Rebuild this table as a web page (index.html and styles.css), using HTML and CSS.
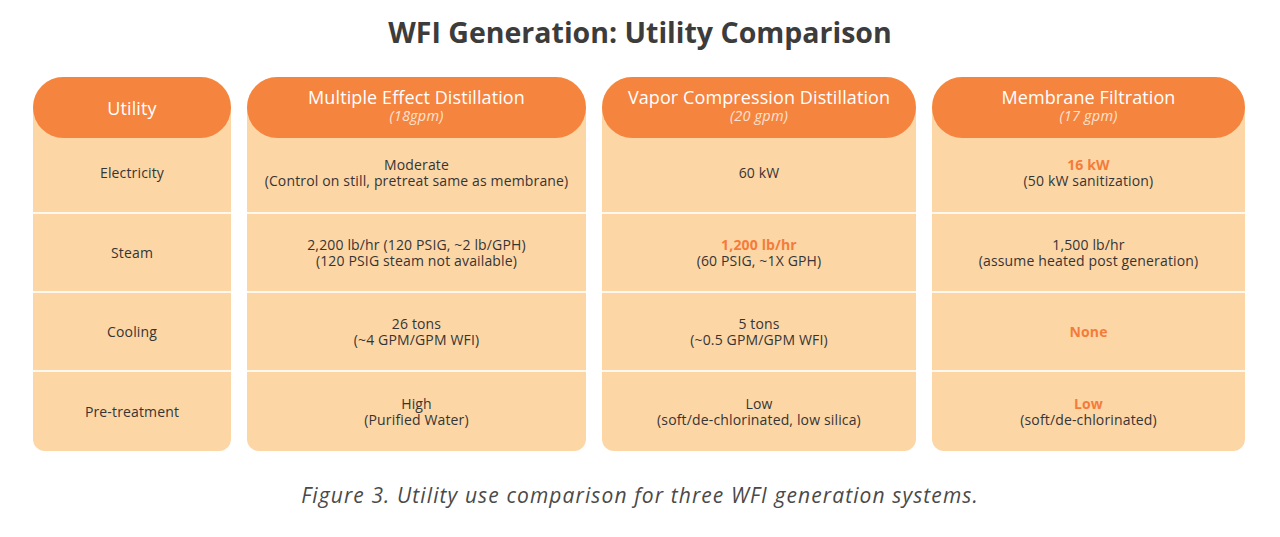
FILE: index.html
```html
<!DOCTYPE html>
<html lang="en">
<head>
<meta charset="utf-8">
<title>WFI Generation: Utility Comparison</title>
<link rel="stylesheet" href="styles.css">
</head>
<body>
<main class="figure">
  <h1 class="title">WFI Generation: Utility Comparison</h1>
  <div class="table">
    <section class="col col-label">
      <header class="head"><span class="head-title">Utility</span></header>
      <div class="cell r1">Electricity</div>
      <div class="cell r2">Steam</div>
      <div class="cell r3">Cooling</div>
      <div class="cell r4">Pre-treatment</div>
    </section>
    <section class="col">
      <header class="head"><span class="head-title">Multiple Effect Distillation</span><span class="head-sub">(18gpm)</span></header>
      <div class="cell r1"><span>Moderate</span><span>(Control on still, pretreat same as membrane)</span></div>
      <div class="cell r2"><span>2,200 lb/hr (120 PSIG, ~2 lb/GPH)</span><span>(120 PSIG steam not available)</span></div>
      <div class="cell r3"><span>26 tons</span><span>(~4 GPM/GPM WFI)</span></div>
      <div class="cell r4"><span>High</span><span>(Purified Water)</span></div>
    </section>
    <section class="col">
      <header class="head"><span class="head-title">Vapor Compression Distillation</span><span class="head-sub">(20 gpm)</span></header>
      <div class="cell r1"><span>60 kW</span></div>
      <div class="cell r2"><span class="hi">1,200 lb/hr</span><span>(60 PSIG, ~1X GPH)</span></div>
      <div class="cell r3"><span>5 tons</span><span>(~0.5 GPM/GPM WFI)</span></div>
      <div class="cell r4"><span>Low</span><span>(soft/de-chlorinated, low silica)</span></div>
    </section>
    <section class="col">
      <header class="head"><span class="head-title">Membrane Filtration</span><span class="head-sub">(17 gpm)</span></header>
      <div class="cell r1"><span class="hi">16 kW</span><span>(50 kW sanitization)</span></div>
      <div class="cell r2"><span>1,500 lb/hr</span><span>(assume heated post generation)</span></div>
      <div class="cell r3"><span class="hi">None</span></div>
      <div class="cell r4"><span class="hi">Low</span><span>(soft/de-chlorinated)</span></div>
    </section>
  </div>
  <p class="caption">Figure 3. Utility use comparison for three WFI generation systems.</p>
</main>
</body>
</html>
```

FILE: styles.css
```css
* { box-sizing: border-box; }

html, body {
  margin: 0;
  padding: 0;
  background: #ffffff;
}

body {
  font-family: "Open Sans", "Liberation Sans", sans-serif;
  color: #3b3b3b;
}

.figure {
  width: 1280px;
  height: 537px;
  padding-top: 12px;
}

.title {
  margin: 0;
  height: 65px;
  text-align: center;
  font-size: 28.5px;
  line-height: 40px;
  font-weight: 700;
  color: #3c3c3c;
}

.table {
  display: grid;
  grid-template-columns: 198px 339px 314px 313px;
  column-gap: 16px;
  margin-left: 33px;
}

.col {
  display: flex;
  flex-direction: column;
  background: #fdd6a6;
  border-radius: 30px 30px 12px 12px;
}

.head {
  height: 61px;
  background: #f5843f;
  border-radius: 31px;
  color: #ffffff;
  display: flex;
  flex-direction: column;
  align-items: center;
  justify-content: center;
  padding-bottom: 3px;
}

.head-title {
  font-size: 18px;
  line-height: 20px;
  font-weight: 500;
  letter-spacing: 0.1px;
}

.head-sub {
  font-size: 14.5px;
  line-height: 18px;
  font-style: italic;
  color: #fde3cf;
  letter-spacing: 0.2px;
}

.col-label .head { padding-bottom: 0; }

.cell {
  display: flex;
  flex-direction: column;
  align-items: center;
  justify-content: center;
  text-align: center;
  font-size: 14px;
  line-height: 16px;
  letter-spacing: 0.15px;
  color: #353535;
}

.r1 { height: 74px; padding-bottom: 4px; }
.r2 { height: 79px; border-top: 2px solid #fff8ef; }
.r3 { height: 79px; border-top: 2px solid #fff8ef; }
.r4 { height: 81px; border-top: 2px solid #fff8ef; }

.hi {
  color: #f47c3a;
  font-weight: 700;
}

.caption {
  margin: 30px 0 0;
  text-align: center;
  font-size: 21px;
  font-style: italic;
  font-weight: 400;
  color: #4a4a4a;
  letter-spacing: 1.1px;
}
```
